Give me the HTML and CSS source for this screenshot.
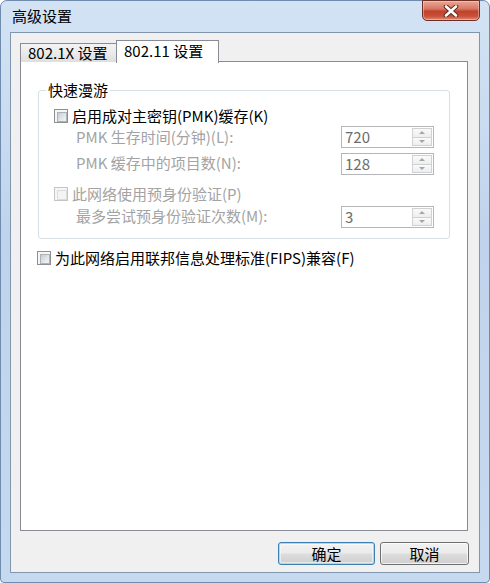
FILE: index.html
```html
<!DOCTYPE html>
<html lang="zh-CN">
<head>
<meta charset="utf-8">
<title>高级设置</title>
<link rel="stylesheet" href="styles.css">
</head>
<body>
<div class="window">
  <div class="titlebar">
    <span class="title">高级设置</span>
    <button class="close" type="button" aria-label="关闭">
      <svg width="16" height="12" viewBox="0 0 16 12">
        <path d="M3 1.5 L13 10.5 M13 1.5 L3 10.5" stroke="#5a2a22" stroke-width="4.6" stroke-linecap="round" fill="none"/>
        <path d="M3 1.5 L13 10.5 M13 1.5 L3 10.5" stroke="#ffffff" stroke-width="2.6" stroke-linecap="round" fill="none"/>
      </svg>
    </button>
  </div>
  <div class="client">
    <div class="tabs">
      <div class="tab">802.1X 设置</div>
      <div class="tab active">802.11 设置</div>
    </div>
    <div class="panel">
      <fieldset class="group">
        <legend>快速漫游</legend>
        <div class="row check-row">
          <span class="cb"></span><span class="lbl">启用成对主密钥(PMK)缓存(K)</span>
        </div>
        <div class="row spin-row r2">
          <span class="lbl dis">PMK 生存时间(分钟)(L):</span>
          <div class="spin"><span class="val">720</span><span class="arrows"><span class="up"></span><span class="down"></span></span></div>
        </div>
        <div class="row spin-row r3">
          <span class="lbl dis">PMK 缓存中的项目数(N):</span>
          <div class="spin"><span class="val">128</span><span class="arrows"><span class="up"></span><span class="down"></span></span></div>
        </div>
        <div class="row check-row r4">
          <span class="cb disabled"></span><span class="lbl dis">此网络使用预身份验证(P)</span>
        </div>
        <div class="row spin-row r5">
          <span class="lbl dis">最多尝试预身份验证次数(M):</span>
          <div class="spin"><span class="val">3</span><span class="arrows"><span class="up"></span><span class="down"></span></span></div>
        </div>
      </fieldset>
      <div class="row check-row fips">
        <span class="cb"></span><span class="lbl">为此网络启用联邦信息处理标准(FIPS)兼容(F)</span>
      </div>
    </div>
    <div class="buttons">
      <button class="btn default" type="button">确定</button>
      <button class="btn cancel" type="button">取消</button>
    </div>
  </div>
</div>
</body>
</html>
```
FILE: styles.css
```css
* { box-sizing: border-box; }
html, body { margin: 0; padding: 0; background: #ffffff; }
body {
  font-family: "Noto Sans CJK SC", "Liberation Sans", sans-serif;
  font-size: 15px;
  color: #000;
}
.window {
  width: 490px;
  height: 583px;
  background: linear-gradient(180deg, #d3e3f4 0%, #bfd4ec 40%, #c5d9ef 100%);
  border: 1px solid #6f8bae;
  border-radius: 7px 7px 4px 4px;
  display: flex;
  flex-direction: column;
  padding: 0 9px 9px 9px;
}
.titlebar {
  height: 31px;
  display: flex;
  align-items: flex-start;
  justify-content: space-between;
}
.title {
  margin-top: 5px;
  margin-left: 2px;
  line-height: 20px;
  font-size: 15px;
}
.close {
  width: 58px;
  height: 21px;
  margin-top: -1px;
  padding: 0;
  border: 1px solid #6e2f25;
  border-radius: 0 0 5px 5px;
  background: linear-gradient(180deg, #e9a797 0%, #d77a65 40%, #c2412b 55%, #c8513b 80%, #df8a72 100%);
  box-shadow: inset 0 0 0 1px rgba(255,220,210,0.45);
  display: flex;
  align-items: center;
  justify-content: center;
}
.client {
  flex: 1;
  background: #f0f0f0;
  border: 1px solid #8195ad;
  display: flex;
  flex-direction: column;
  padding: 7px 10px 0 9px;
}
.tabs {
  display: flex;
  height: 22px;
  position: relative;
  z-index: 1;
}
.tab {
  margin-top: 3px;
  height: 19px;
  width: 96px;
  padding-left: 7px;
  line-height: 18px;
  border: 1px solid #898c95;
  border-bottom: none;
  border-right: none;
  background: linear-gradient(180deg, #f3f3f3 0%, #ebebeb 50%, #dedede 100%);
  white-space: nowrap;
}
.tab.active {
  margin-top: 0;
  height: 23px;
  width: 103px;
  padding-left: 7px;
  line-height: 20px;
  border-right: 1px solid #898c95;
  background: #ffffff;
}
.panel {
  height: 470px;
  width: 448px;
  margin-top: -1px;
  background: #ffffff;
  border: 1px solid #898c95;
  display: flex;
  flex-direction: column;
}
.group {
  margin: 19px 0 0 17px;
  width: 412px;
  padding: 8px 0 10px 0;
  border: 1px solid #d5dfe5;
  border-radius: 3px;
  min-inline-size: 0;
}
.group legend {
  margin-left: 7px;
  padding: 0 2px;
  line-height: 18px;
  height: 18px;
}
.row {
  display: flex;
  align-items: center;
  height: 18px;
  white-space: nowrap;
}
.check-row { padding-left: 15px; }
.check-row .lbl { margin-left: 4px; }
.lbl { line-height: 18px; }
.dis { color: #a3a3a3; }
.spin-row {
  height: 22px;
  padding-left: 37px;
  justify-content: space-between;
  padding-right: 15px;
}
.spin-row .lbl { margin-top: -3px; }
.r2 { margin-top: 1px; }
.r2 .lbl { margin-top: 0; }
.r3 { margin-top: 5px; }
.r4 { margin-top: 10px; }
.r5 { margin-top: 3px; }
.fips { margin-top: 10px; padding-left: 16px; }
.cb {
  width: 14px;
  height: 14px;
  border: 1px solid #8e8f8f;
  background: #f6f6f6;
  padding: 2px;
  flex: none;
}
.cb::before {
  content: "";
  display: block;
  width: 100%;
  height: 100%;
  border: 1px solid #adb2b8;
  background: linear-gradient(135deg, #c8ccd2 0%, #e4e6e9 60%, #f4f4f4 100%);
}
.cb.disabled { border-color: #c5c5c5; }
.cb.disabled::before { border-color: #dcdcdc; background: #f4f4f4; }
.spin {
  width: 93px;
  height: 22px;
  border: 1px solid #b4b6b9;
  background: #ffffff;
  display: flex;
  align-items: center;
  justify-content: space-between;
  padding: 1px 1px 1px 3px;
}
.val {
  color: #6d6d6d;
  line-height: 18px;
  font-size: 15px;
}
.arrows {
  width: 20px;
  height: 18px;
  display: flex;
  flex-direction: column;
  gap: 0;
}
.arrows span {
  flex: 1;
  border: 1px solid #cfd1d3;
  background: linear-gradient(180deg, #fafafa, #eeeeee);
  display: flex;
  align-items: center;
  justify-content: center;
}
.arrows .down { border-top: none; }
.arrows .up::after {
  content: "";
  border-left: 3px solid transparent;
  border-right: 3px solid transparent;
  border-bottom: 3px solid #a6a6a6;
}
.arrows .down::after {
  content: "";
  border-left: 3px solid transparent;
  border-right: 3px solid transparent;
  border-top: 3px solid #a6a6a6;
}
.buttons {
  display: flex;
  justify-content: flex-end;
  gap: 5px;
  margin-top: 11px;
  padding-right: 0;
}
.btn {
  height: 23px;
  padding: 0;
  font-family: "Noto Sans CJK SC", sans-serif;
  font-size: 15px;
  line-height: 20px;
  color: #000;
  border: 1px solid #707070;
  border-radius: 3px;
  background: linear-gradient(180deg, #f2f2f2 0%, #ebebeb 48%, #dddddd 52%, #cfcfcf 100%);
  box-shadow: inset 0 0 0 1px rgba(255,255,255,0.7);
}
.btn.default {
  width: 97px;
  border-color: #3c7fb1;
  box-shadow: inset 0 0 0 1px #a6dcf0, inset 0 0 0 2px rgba(255,255,255,0.5);
}
.btn.cancel { width: 89px; }
```
